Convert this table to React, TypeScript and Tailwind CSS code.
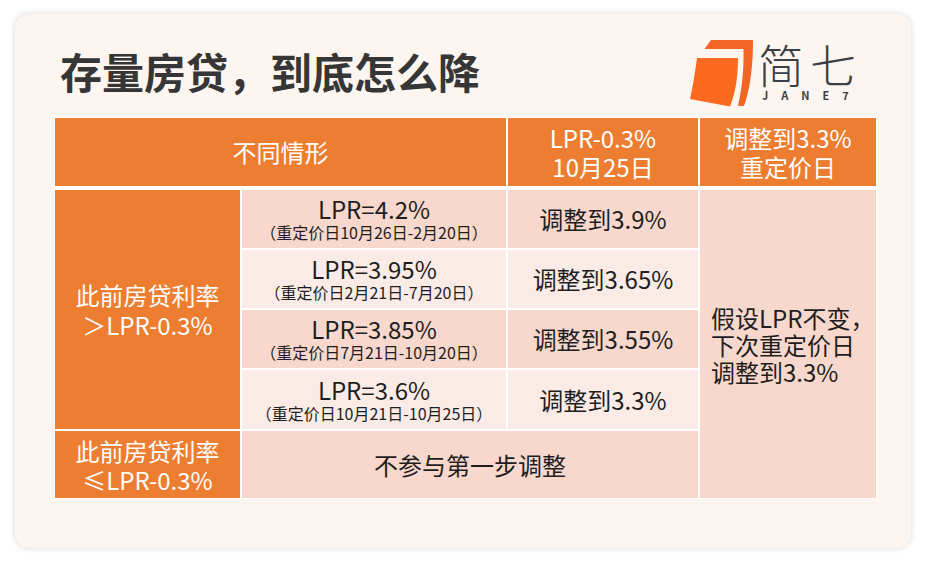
const font = { fontFamily: '"Noto Sans CJK SC", "Noto Sans", sans-serif' };

function Logo() {
  return (
    <div className="flex items-start">
      <svg width="66" height="68" viewBox="0 0 66 68" className="mt-[-1px]">
        <path d="M23,1 L65,1 C65,28 62,50 56,67 L50,67 C54,50 56,30 55.5,10 L16.5,10 Z" fill="#f26522" />
        <path d="M9,19 L50,19 C50,40 47,55 42,67.5 L2,60 C5,47 7,33 9,19 Z" fill="#fb6a1f" />
      </svg>
      <div className="ml-[4px] flex flex-col items-start text-[#3d4045]">
        <div className="mt-[-2px] text-[46px] leading-[50px] tracking-[6px] font-light">简七</div>
        <div className="mt-[1px] pl-[4px] text-[11px] leading-[12px] font-semibold tracking-[13px]">JANE7</div>
      </div>
    </div>
  );
}

const cols = "grid grid-cols-[185px_264px_190px_176px] gap-x-[2px]";

function RateCell({ rate, range, light }: { rate: string; range: string; light?: boolean }) {
  return (
    <div className={`flex flex-col items-center justify-center ${light ? "bg-[#fbebe6]" : "bg-[#f8d7cc]"}`}>
      <div className="text-[24px] leading-[26px]">{rate}</div>
      <div className="text-[16px] leading-[20px]">{range}</div>
    </div>
  );
}

function AdjCell({ text, light }: { text: string; light?: boolean }) {
  return (
    <div className={`flex items-center justify-center text-[24px] ${light ? "bg-[#fbebe6]" : "bg-[#f8d7cc]"}`}>
      {text}
    </div>
  );
}

export default function App() {
  return (
    <div className="min-h-screen bg-white px-[15px] pt-[14px]" style={font}>
      <div className="h-[534px] w-[896px] rounded-[14px] bg-[#fdf6f0] shadow-[0_0_6px_rgba(0,0,0,0.16)]">
        <div className="flex h-[103px] items-start justify-between">
          <h1 className="ml-[45px] mt-[34px] text-[42px] font-bold leading-[46px] text-[#363636]">
            存量房贷，到底怎么降
          </h1>
          <div className="mr-[49px] mt-[26px]">
            <Logo />
          </div>
        </div>

        <div className="ml-[39px] flex w-[823px] flex-col gap-[4px] bg-white p-px">
          <div className={`${cols} h-[68px] text-[24px] text-white`}>
            <div className="col-span-2 flex items-center justify-center bg-[#ed7d31]">不同情形</div>
            <div className="flex flex-col items-center justify-center bg-[#ed7d31] leading-[29px]">
              <span>LPR-0.3%</span>
              <span>10月25日</span>
            </div>
            <div className="flex flex-col items-center justify-center bg-[#ed7d31] leading-[29px]">
              <span>调整到3.3%</span>
              <span>重定价日</span>
            </div>
          </div>

          <div className={`${cols} grid-rows-[58px_58px_58px_59px_67px] gap-y-[2px] text-[#1e1e1e]`}>
            <div className="row-span-4 flex flex-col items-center justify-center bg-[#ed7d31] text-[24px] leading-[30px] text-white">
              <span>此前房贷利率</span>
              <span>＞LPR-0.3%</span>
            </div>
            <RateCell rate="LPR=4.2%" range="（重定价日10月26日-2月20日）" />
            <AdjCell text="调整到3.9%" />
            <div className="row-span-5 flex flex-col justify-center bg-[#f8d7cc] pl-[11px] text-[24px] leading-[27px]">
              <span>假设LPR不变，</span>
              <span>下次重定价日</span>
              <span>调整到3.3%</span>
            </div>
            <RateCell rate="LPR=3.95%" range="（重定价日2月21日-7月20日）" light />
            <AdjCell text="调整到3.65%" light />
            <RateCell rate="LPR=3.85%" range="（重定价日7月21日-10月20日）" />
            <AdjCell text="调整到3.55%" />
            <RateCell rate="LPR=3.6%" range="（重定价日10月21日-10月25日）" light />
            <AdjCell text="调整到3.3%" light />
            <div className="flex flex-col items-center justify-center bg-[#ed7d31] text-[24px] leading-[29px] text-white">
              <span>此前房贷利率</span>
              <span>≤LPR-0.3%</span>
            </div>
            <div className="col-span-2 flex items-center justify-center bg-[#f8d7cc] text-[24px]">不参与第一步调整</div>
          </div>
        </div>
      </div>
    </div>
  );
}
